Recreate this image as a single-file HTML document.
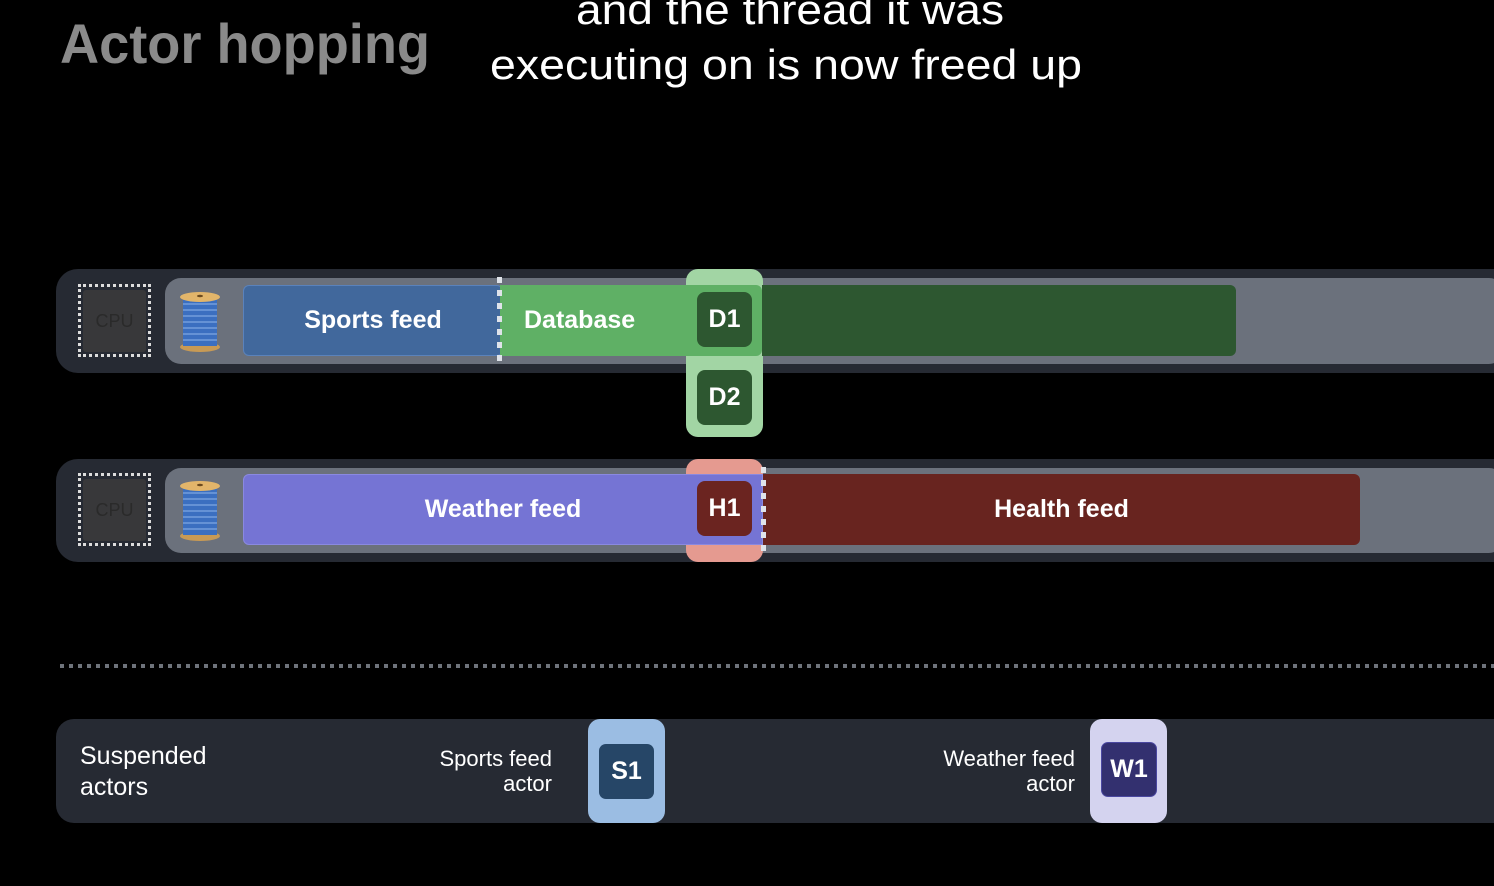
<!DOCTYPE html>
<html><head><meta charset="utf-8"><style>
body{margin:0;background:#000;width:1494px;height:886px;overflow:hidden;position:relative;font-family:"Liberation Sans",sans-serif}
.a{position:absolute;box-sizing:border-box}
.lbl{color:#fff;font-weight:bold;font-size:25px;display:flex;align-items:center;justify-content:center}
.chip{background:#38383a;border-radius:3px}
.dots{border:3px dotted #e6e6e6}
.vd{width:5px;background:repeating-linear-gradient(to bottom,#dfe3ea 0 6px,transparent 6px 13px)}
</style></head><body>
<svg class="a" style="left:0;top:0" width="1494" height="100">
<text x="60" y="63" textLength="370" lengthAdjust="spacingAndGlyphs" font-family="Liberation Sans" font-weight="bold" font-size="56" fill="#8a8a8a">Actor hopping</text>
<text x="576" y="24" textLength="428" lengthAdjust="spacingAndGlyphs" font-family="Liberation Sans" font-size="42" fill="#fff">and the thread it was</text>
<text x="490" y="79" textLength="592" lengthAdjust="spacingAndGlyphs" font-family="Liberation Sans" font-size="42" fill="#fff">executing on is now freed up</text>
</svg>

<!-- Row 1 -->
<div class="a" style="left:56px;top:269px;width:1460px;height:104px;background:#262a33;border-radius:22px"></div>
<div class="a" style="left:165px;top:278px;width:1340px;height:86px;background:#6b717c;border-radius:16px"></div>
<div class="a dots" style="left:78px;top:284px;width:73px;height:73px;border-color:#ddd"></div>
<div class="a chip" style="left:83px;top:290px;width:63px;height:62px;color:#2a2a2a;font-size:18px;display:flex;align-items:center;justify-content:center">CPU</div>
<svg class="a" style="left:178px;top:290px" width="44" height="64"><ellipse cx="22" cy="57" rx="20" ry="5" fill="#c89a55"/><rect x="5" y="8" width="34" height="48" fill="#3b6fc0"/><g stroke="#8fb4ea" stroke-width="1">
<line x1="5" y1="14" x2="39" y2="14"/><line x1="5" y1="20" x2="39" y2="20"/><line x1="5" y1="26" x2="39" y2="26"/><line x1="5" y1="32" x2="39" y2="32"/><line x1="5" y1="38" x2="39" y2="38"/><line x1="5" y1="44" x2="39" y2="44"/><line x1="5" y1="50" x2="39" y2="50"/></g><ellipse cx="22" cy="7" rx="20" ry="5" fill="#e2b56a"/><ellipse cx="22" cy="6" rx="3" ry="1.3" fill="#6b4a1f"/></svg>
<div class="a lbl" style="left:243px;top:285px;width:260px;height:71px;background:#41689c;border-radius:6px;border:1px solid #5a82bb">Sports feed</div>
<div class="a" style="left:686px;top:269px;width:77px;height:168px;background:#a2d5a4;border-radius:12px"></div>
<div class="a lbl" style="left:500px;top:285px;width:262px;height:71px;background:#5fb065;border-radius:0 6px 6px 0;justify-content:flex-start;padding-left:24px">Database</div>
<div class="a" style="left:762px;top:285px;width:474px;height:71px;background:#2d5730;border-radius:0 6px 6px 0"></div>
<div class="a vd" style="left:497px;top:277px;height:86px"></div>
<div class="a lbl" style="left:697px;top:292px;width:55px;height:55px;background:#2d5730;border-radius:8px">D1</div>
<div class="a lbl" style="left:697px;top:370px;width:55px;height:55px;background:#2d5730;border-radius:8px">D2</div>

<!-- Row 2 -->
<div class="a" style="left:56px;top:459px;width:1460px;height:103px;background:#262a33;border-radius:22px"></div>
<div class="a" style="left:165px;top:468px;width:1340px;height:85px;background:#6b717c;border-radius:16px"></div>
<div class="a dots" style="left:78px;top:473px;width:73px;height:73px;border-color:#ddd"></div>
<div class="a chip" style="left:83px;top:479px;width:63px;height:62px;color:#2a2a2a;font-size:18px;display:flex;align-items:center;justify-content:center">CPU</div>
<svg class="a" style="left:178px;top:479px" width="44" height="64"><ellipse cx="22" cy="57" rx="20" ry="5" fill="#c89a55"/><rect x="5" y="8" width="34" height="48" fill="#3b6fc0"/><g stroke="#8fb4ea" stroke-width="1">
<line x1="5" y1="14" x2="39" y2="14"/><line x1="5" y1="20" x2="39" y2="20"/><line x1="5" y1="26" x2="39" y2="26"/><line x1="5" y1="32" x2="39" y2="32"/><line x1="5" y1="38" x2="39" y2="38"/><line x1="5" y1="44" x2="39" y2="44"/><line x1="5" y1="50" x2="39" y2="50"/></g><ellipse cx="22" cy="7" rx="20" ry="5" fill="#e2b56a"/><ellipse cx="22" cy="6" rx="3" ry="1.3" fill="#6b4a1f"/></svg>
<div class="a" style="left:686px;top:459px;width:77px;height:103px;background:#e59a90;border-radius:12px"></div>
<div class="a lbl" style="left:243px;top:474px;width:520px;height:71px;background:#7574d4;border-radius:6px 0 0 6px;border:1px solid #8a89e0">Weather feed</div>
<div class="a lbl" style="left:763px;top:474px;width:597px;height:71px;background:#68241f;border-radius:0 6px 6px 0">Health feed</div>
<div class="a vd" style="left:761px;top:467px;height:86px"></div>
<div class="a lbl" style="left:697px;top:481px;width:55px;height:55px;background:#6b2420;border-radius:8px">H1</div>

<!-- separator -->
<div class="a" style="left:60px;top:664px;width:1440px;height:4px;background:repeating-linear-gradient(to right,#6e737b 0 4px,transparent 4px 9px)"></div>

<!-- bottom -->
<div class="a" style="left:56px;top:719px;width:1460px;height:104px;background:#262a33;border-radius:18px"></div>
<div class="a" style="left:80px;top:741px;color:#fff;font-size:25px;line-height:31px">Suspended<br>actors</div>
<div class="a" style="left:380px;top:746px;width:172px;color:#fff;font-size:22px;line-height:25px;text-align:right">Sports feed<br>actor</div>
<div class="a" style="left:588px;top:719px;width:77px;height:104px;background:#9bbde3;border-radius:12px"></div>
<div class="a lbl" style="left:599px;top:744px;width:55px;height:55px;background:#264667;border-radius:7px">S1</div>
<div class="a" style="left:880px;top:746px;width:195px;color:#fff;font-size:22px;line-height:25px;text-align:right">Weather feed<br>actor</div>
<div class="a" style="left:1090px;top:719px;width:77px;height:104px;background:#d4d3ef;border-radius:12px"></div>
<div class="a lbl" style="left:1101px;top:742px;width:56px;height:55px;background:#33306f;border-radius:7px;border:1px solid #4a47a0">W1</div>
</body></html>
